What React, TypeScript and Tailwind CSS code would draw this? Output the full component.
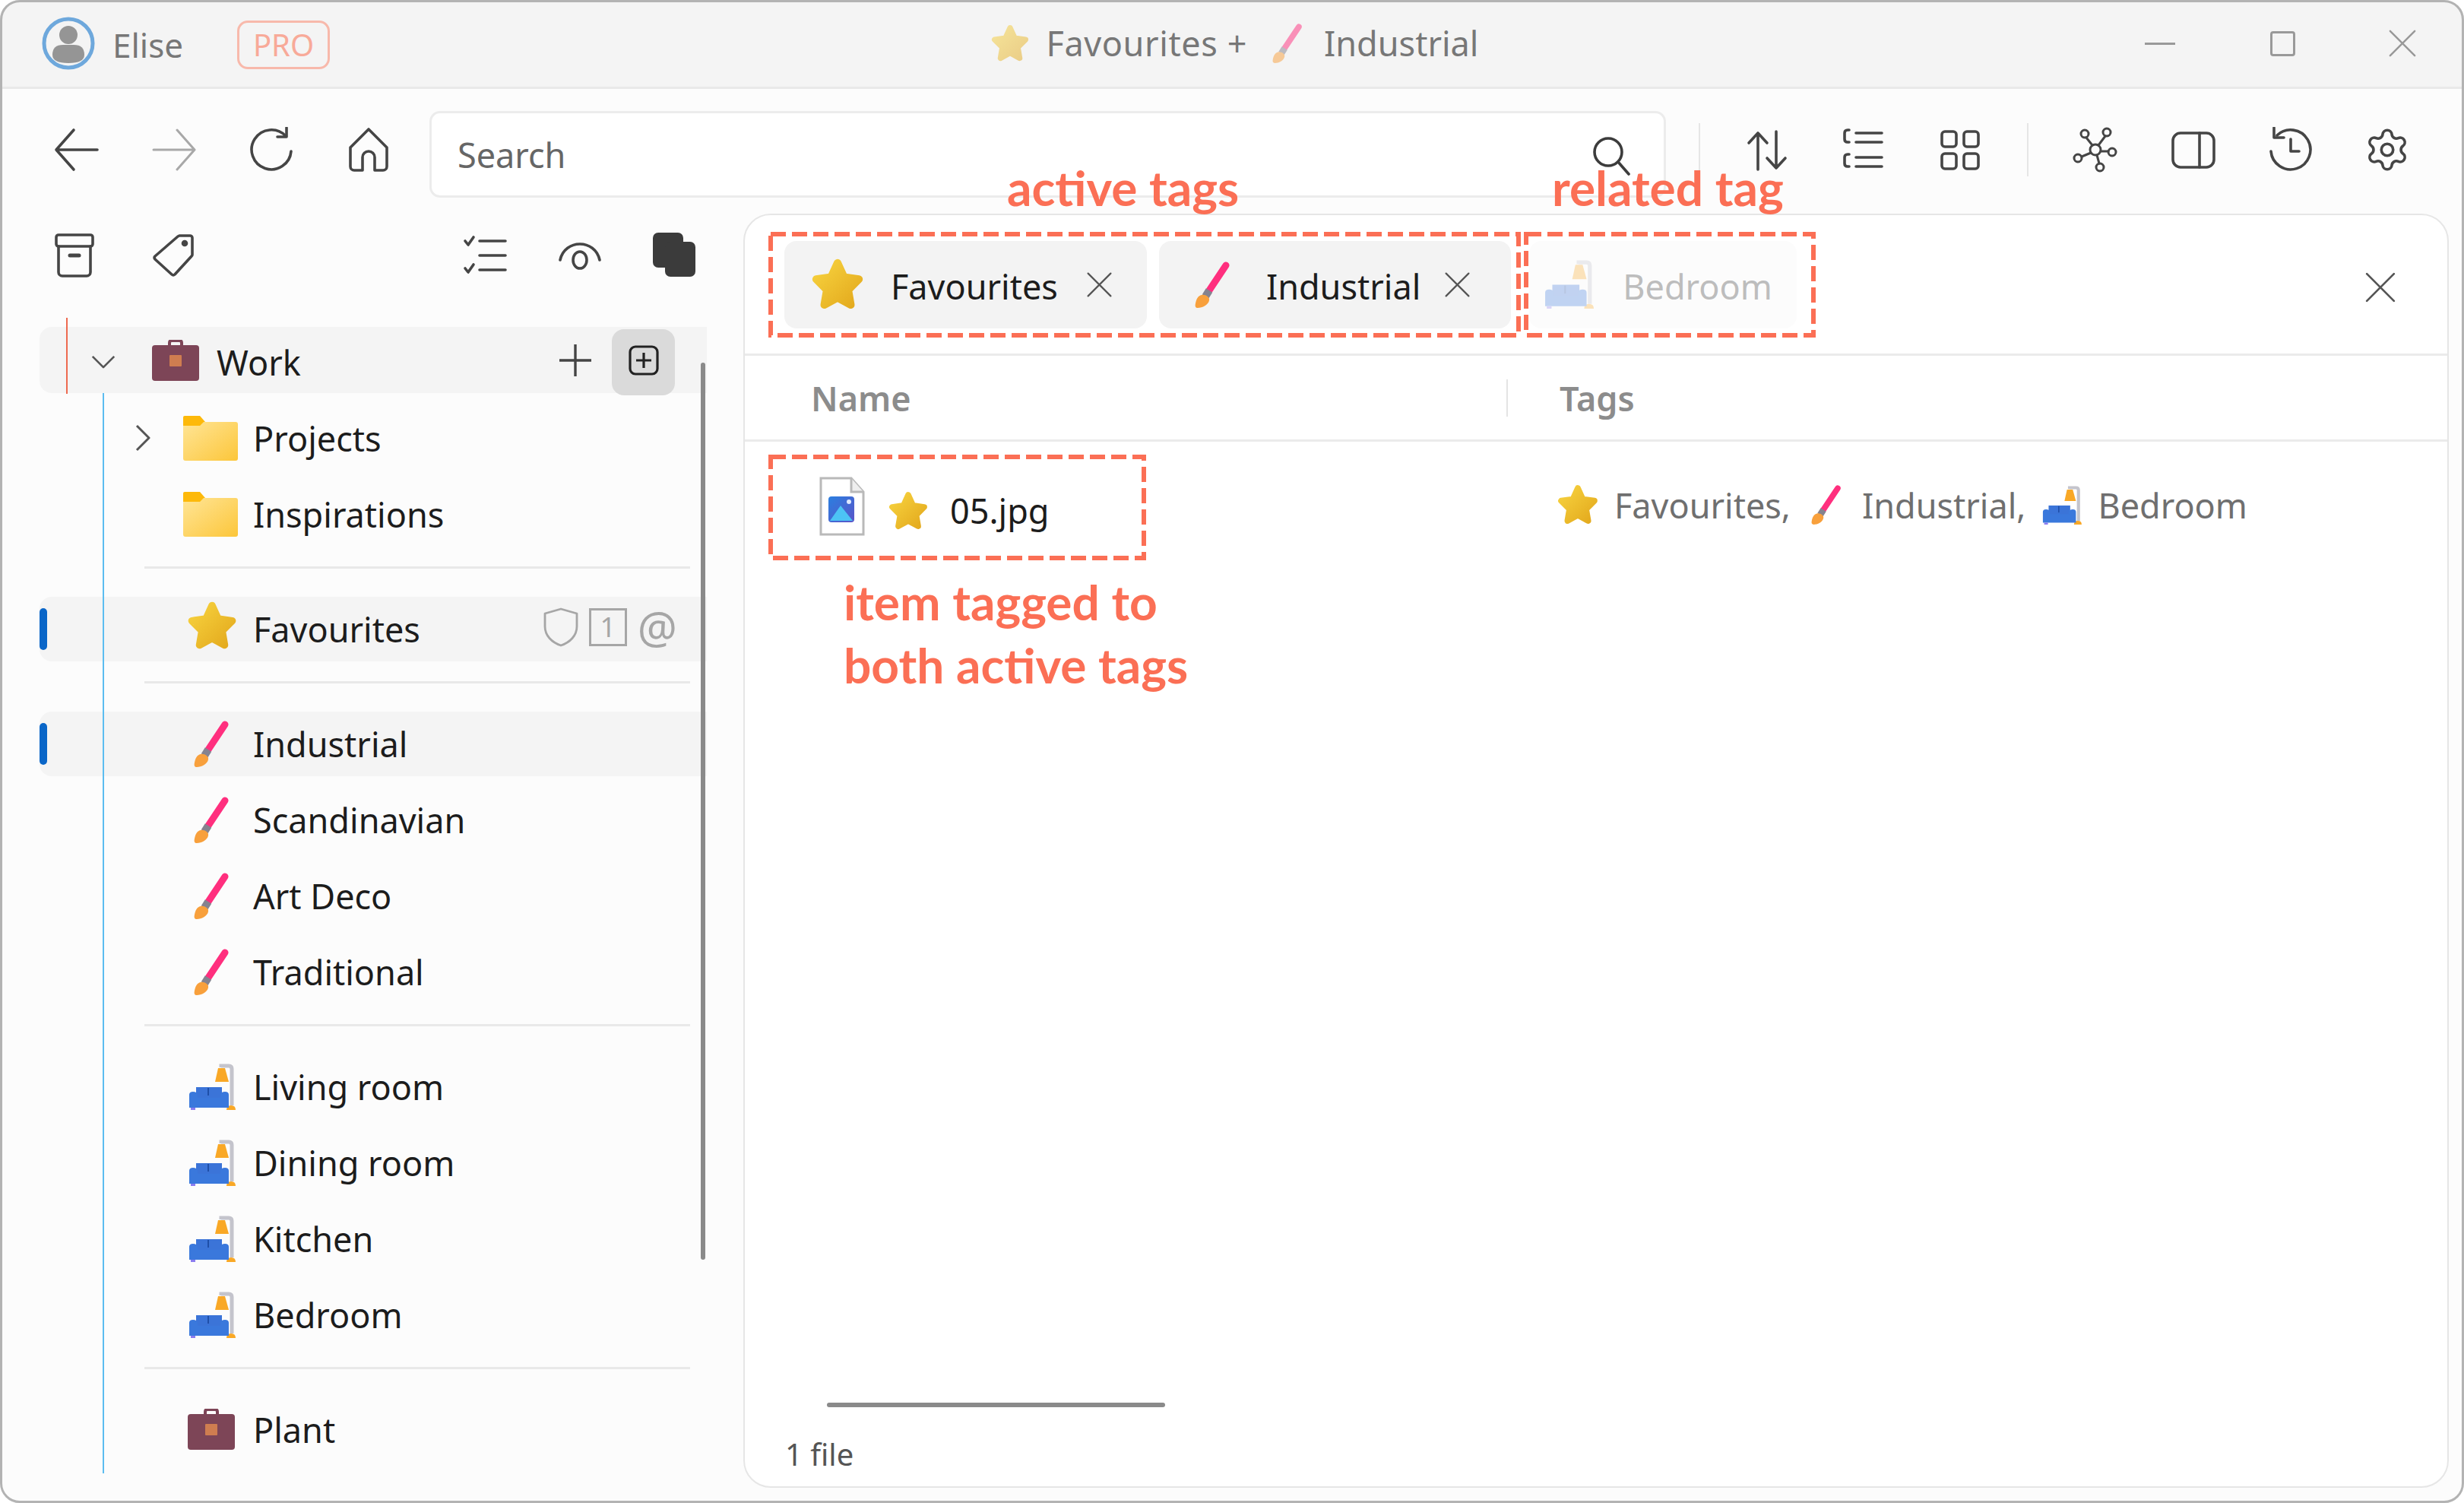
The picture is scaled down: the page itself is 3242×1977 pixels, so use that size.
import type { ReactNode } from 'react'
import { Settings } from 'lucide-react'

// --- coloured tag icons ---

function StarIcon({ className = '' }: { className?: string }) {
	return (
		<svg viewBox="0 0 64 64" className={className}>
			<defs>
				<linearGradient id="star-fill" x1="0" y1="0" x2="1" y2="1">
					<stop offset="0" stopColor="#f7d23e" />
					<stop offset="1" stopColor="#e3a91d" />
				</linearGradient>
			</defs>
			<path
				d="M32 7 39.5 23.5 57 26 44.5 38.5 47.5 56 32 47.5 16.5 56 19.5 38.5 7 26 24.5 23.5Z"
				fill="url(#star-fill)"
				stroke="url(#star-fill)"
				strokeWidth="9"
				strokeLinejoin="round"
			/>
		</svg>
	)
}

function BrushIcon({ className = '' }: { className?: string }) {
	return (
		<svg viewBox="0 0 47 61" className={className}>
			<path d="M41 5 19 38" stroke="#ff2f7e" strokeWidth="9" strokeLinecap="round" fill="none" />
			<path d="M19 38 14 46" stroke="#85838f" strokeWidth="10" fill="none" />
			<path d="M9 44c5-1 11 3 10 7-1 6-9 10-15 10-3 0-4-2-3-6 1-5 3-10 8-11Z" fill="#f8a03c" />
		</svg>
	)
}

function SofaIcon({ className = '' }: { className?: string }) {
	return (
		<svg viewBox="0 0 62 61" className={className}>
			<path d="M43 5V3h10q4 0 4 4v48" stroke="#c4c4cc" strokeWidth="5" fill="none" />
			<path d="M39 6h9l5 18H35Z" fill="#f9a826" />
			<path d="M50 61q0-6 6-6t6 6Z" fill="#f9a826" />
			<path d="M10 31h34v16H10Z" fill="#3b74d8" />
			<path d="M1 41q0-4 5-4t6 4v4h30v-4q1-4 6-4t5 4v17H1Z" fill="#3a78dc" />
			<path d="M26 32v10" stroke="#1f4fa8" strokeWidth="2" />
			<path d="M3 58h6v3H3Z" fill="#8a7cf0" />
		</svg>
	)
}

function FolderIcon() {
	return (
		<svg viewBox="0 0 72 59" className="w-[72px] h-[59px]">
			<defs>
				<linearGradient id="folder-fill" x1="0" y1="0" x2="1" y2="1">
					<stop offset="0" stopColor="#ffe596" />
					<stop offset="1" stopColor="#fcc63a" />
				</linearGradient>
			</defs>
			<path d="M2 0h20l7 8v14H0V2q0-2 2-2Z" fill="#fdb90a" />
			<path d="M0 13h22l5-5h42q3 0 3 3v45q0 3-3 3H3q-3 0-3-3Z" fill="url(#folder-fill)" />
		</svg>
	)
}

function CaseIcon({ className = '' }: { className?: string }) {
	return (
		<svg viewBox="0 0 62 54" className={className}>
			<path d="M23 9V4q0-3 3-3h10q3 0 3 3v5" stroke="#7d4557" strokeWidth="4" fill="none" />
			<rect x="0" y="7" width="62" height="47" rx="4" fill="#7d4557" />
			<rect x="23" y="20" width="16" height="15" rx="1" fill="#cf7d50" />
		</svg>
	)
}

function FileIcon() {
	return (
		<svg viewBox="0 0 60 78" className="w-[60px] h-[78px]">
			<defs>
				<linearGradient id="pic-fill" x1="0" y1="0" x2="1" y2="1">
					<stop offset="0" stopColor="#2b7fe0" />
					<stop offset="1" stopColor="#5a55c8" />
				</linearGradient>
			</defs>
			<path d="M2 2h40l16 18v56H2Z" fill="#fff" stroke="#b9b9b9" strokeWidth="3" />
			<path d="M42 2v18h16" fill="#efefef" stroke="#b9b9b9" strokeWidth="3" />
			<rect x="12" y="26" width="34" height="34" rx="4" fill="url(#pic-fill)" />
			<path d="M14 58 28 38 44 58Z" fill="#4cc3f5" />
			<circle cx="39" cy="33" r="3" fill="#dfeaff" />
		</svg>
	)
}

// --- line icons ---

function Ico({ children, className = 'text-[#454545]', sw = 3.6 }: { children: ReactNode; className?: string; sw?: number }) {
	return (
		<svg viewBox="0 0 60 60" fill="none" stroke="currentColor" strokeWidth={sw} strokeLinecap="round" strokeLinejoin="round" className={`w-[60px] h-[60px] ${className}`}>
			{children}
		</svg>
	)
}

function CloseX({ className }: { className: string }) {
	return (
		<svg viewBox="0 0 40 40" fill="none" stroke="currentColor" strokeWidth="2.6" strokeLinecap="round" className={className}>
			<path d="M3 3 37 37M37 3 3 37" />
		</svg>
	)
}

function IconBox({ children, className = 'w-[128px]' }: { children: ReactNode; className?: string }) {
	return <div className={`flex items-center justify-center ${className}`}>{children}</div>
}

// --- sidebar ---

function Row({
	icon,
	label,
	chevron,
	active,
	trailing,
}: {
	icon: ReactNode
	label: string
	chevron?: boolean
	active?: boolean
	trailing?: ReactNode
}) {
	return (
		<div className={`relative h-[100px] flex items-center`}>
			{active && (
				<>
					<div className="absolute left-0 right-0 top-[8px] h-[85px] rounded-l-[16px] bg-[#f4f4f4]" />
					<div className="absolute left-0 top-[23px] w-[10px] h-[55px] rounded-full bg-[#0a66c8]" />
				</>
			)}
			<div className="relative flex items-center w-full pl-[122px]">
				<div className="w-[67px] pl-[4px] flex justify-start">
					{chevron && (
						<svg viewBox="0 0 20 36" fill="none" stroke="#555" strokeWidth="3" strokeLinejoin="round" className="w-[20px] h-[36px]">
							<path d="M2 2 18 18 2 34" />
						</svg>
					)}
				</div>
				<div className="w-[72px] flex justify-center">{icon}</div>
				<span className="ml-[20px] text-[45px] leading-none text-[#1c1c1c]">{label}</span>
				{trailing}
			</div>
		</div>
	)
}

function Divider() {
	return <div className="mt-[19px] mb-[29px] ml-[138px] mr-[22px] h-[3px] bg-[#e9e9e9]" />
}

const sidebarStar = <StarIcon className="ml-[4px] mt-[-8px] w-[68px] h-[68px]" />
const sidebarBrush = <BrushIcon className="ml-[3px] w-[47px] h-[61px]" />
const sidebarSofa = <SofaIcon className="ml-[4px] w-[62px] h-[61px]" />

function Sidebar() {
	return (
		<aside className="relative w-[978px] shrink-0">
			<div className="h-[110px] flex items-center justify-between pl-[34px] pr-[29px]">
				<div className="flex">
					<IconBox>
						<Ico>
							<rect x="6" y="3" width="48" height="15" rx="3" />
							<path d="M9 18v34a5 5 0 0 0 5 5h32a5 5 0 0 0 5-5V18" />
							<path d="M24 30h12" strokeWidth="5" />
						</Ico>
					</IconBox>
					<IconBox className="w-[128px] pl-[4px]">
						<Ico>
							<path d="M38 4h14a3 3 0 0 1 3 3v22a3 3 0 0 1-1 2L32 55a3 3 0 0 1-4 0L6 35a3 3 0 0 1 0-4L36 5Z" />
							<circle cx="45" cy="14" r="2.5" fill="currentColor" />
						</Ico>
					</IconBox>
				</div>
				<div className="flex">
					<IconBox className="w-[124px]">
						<Ico>
							<path d="M3 11l4 5 7-10M3 47l4 5 7-10M22 11h34M22 30h34M22 49h34" />
						</Ico>
					</IconBox>
					<IconBox className="w-[124px]">
						<Ico>
							<path d="M4 36C10 8 50 8 56 36" />
							<ellipse cx="30" cy="36" rx="9" ry="11" />
						</Ico>
					</IconBox>
					<IconBox className="w-[124px]">
						<svg viewBox="0 0 60 60" className="w-[60px] h-[60px]" fill="#3b3b3b">
							<rect x="2" y="0" width="40" height="46" rx="7" />
							<rect x="18" y="12" width="40" height="46" rx="7" />
						</svg>
					</IconBox>
				</div>
			</div>

			<div className="relative mt-[35px] ml-[52px] mr-[48px]">
				<div className="absolute left-[83px] top-[91px] bottom-[-8px] w-[2px] bg-[#5cbdf0] z-10" />
				<div className="absolute left-[35px] top-[-8px] h-[100px] w-[2px] bg-[#ee6a50] z-10" />

				<div className="relative h-[100px] flex items-center">
					<div className="absolute left-0 right-0 top-[4px] h-[87px] rounded-l-[16px] bg-[#f4f4f4]" />
					<div className="relative flex items-center w-full pl-[68px] pr-[42px]">
						<div className="w-[32px] flex justify-center">
							<svg viewBox="0 0 36 20" fill="none" stroke="#555" strokeWidth="3" strokeLinejoin="round" className="w-[36px] h-[20px]">
								<path d="M2 2 18 18 34 2" />
							</svg>
						</div>
						<CaseIcon className="ml-[48px] mt-[-4px] w-[62px] h-[54px]" />
						<span className="ml-[23px] text-[45px] leading-none text-[#1c1c1c]">Work</span>
						<svg viewBox="0 0 46 46" fill="none" stroke="#444" strokeWidth="3.4" className="ml-auto mr-[25px] mt-[-4px] w-[46px] h-[46px]">
							<path d="M23 2v42M2 23h42" />
						</svg>
						<div className="w-[83px] h-[87px] rounded-[16px] bg-[#dadada] flex items-center justify-center">
							<svg viewBox="0 0 40 40" fill="none" stroke="#222" strokeWidth="3.2" className="mt-[-4px] w-[40px] h-[40px]">
								<rect x="2" y="2" width="36" height="36" rx="7" />
								<path d="M20 10v20M10 20h20" />
							</svg>
						</div>
					</div>
				</div>

				<Row chevron icon={<FolderIcon />} label="Projects" />
				<Row icon={<FolderIcon />} label="Inspirations" />
				<Divider />
				<Row
					active
					icon={sidebarStar}
					label="Favourites"
					trailing={
						<div className="ml-auto mr-[39px] mb-[4px] flex items-center gap-[14px] text-[#a6a6a6]">
							<svg viewBox="0 0 46 52" fill="none" stroke="currentColor" strokeWidth="2.8" strokeLinejoin="round" className="w-[46px] h-[52px]">
								<path d="M23 2 44 8v17c0 12-9 21-21 25C11 46 2 37 2 25V8Z" />
							</svg>
							<div className="w-[50px] h-[50px] border-[3px] border-[#a6a6a6] flex items-center justify-center text-[36px] leading-none">1</div>
							<span className="text-[58px] leading-none">@</span>
						</div>
					}
				/>
				<Divider />
				<Row active icon={sidebarBrush} label="Industrial" />
				<Row icon={sidebarBrush} label="Scandinavian" />
				<Row icon={sidebarBrush} label="Art Deco" />
				<Row icon={sidebarBrush} label="Traditional" />
				<Divider />
				<Row icon={sidebarSofa} label="Living room" />
				<Row icon={sidebarSofa} label="Dining room" />
				<Row icon={sidebarSofa} label="Kitchen" />
				<Row icon={sidebarSofa} label="Bedroom" />
				<Divider />
				<Row icon={<CaseIcon className="ml-[2px] w-[64px] h-[54px]" />} label="Plant" />
			</div>

			<div className="absolute left-[922px] top-[196px] w-[6px] h-[1180px] rounded-full bg-[#8a8a8a]" />
		</aside>
	)
}

// --- file panel ---

function Chip({ icon, label, iconBox, closeBox }: { icon: ReactNode; label: string; iconBox: string; closeBox: string }) {
	return (
		<div className="h-[115px] flex items-center rounded-[16px] bg-[#f3f3f3]">
			<div className={`flex justify-center ${iconBox}`}>{icon}</div>
			<span className="mt-[4px] text-[45px] leading-none text-[#1c1c1c]">{label}</span>
			<CloseX className={`w-[35px] h-[35px] text-[#555] ${closeBox}`} />
		</div>
	)
}

function FilePanel() {
	return (
		<main className="flex-1 mr-[20px] mb-[20px] flex flex-col rounded-[36px] border-2 border-[#e6e6e6] bg-white">
			<div className="h-[185px] shrink-0 flex items-center pl-[52px] pr-[67px] border-b-[3px] border-[#ebebeb]">
				<div className="flex gap-[16px]">
					<Chip icon={<StarIcon className="w-[72px] h-[72px]" />} label="Favourites" iconBox="w-[140px]" closeBox="ml-[37px] mr-[45px]" />
					<Chip icon={<BrushIcon className="w-[47px] h-[61px]" />} label="Industrial" iconBox="w-[141px]" closeBox="ml-[31px] mr-[53px]" />
				</div>
				<div className="ml-[24px] w-[352px] h-[115px] flex items-center rounded-[16px] bg-[#fcfcfc]">
					<SofaIcon className="ml-[20px] w-[65px] h-[64px] opacity-30" />
					<span className="ml-[38px] mt-[4px] text-[45px] leading-none text-[#bdbdbd]">Bedroom</span>
				</div>
				<CloseX className="ml-auto mt-[8px] w-[42px] h-[42px] text-[#555]" />
			</div>

			<div className="h-[113px] shrink-0 grid grid-cols-[1002px_1fr] items-center border-b-[3px] border-[#ebebeb]">
				<span className="pl-[87px] text-[45px] font-semibold leading-none text-[#8c8c8c]">Name</span>
				<div className="flex items-center">
					<div className="w-[2px] h-[49px] bg-[#e4e4e4]" />
					<span className="ml-[68px] text-[45px] font-semibold leading-none text-[#8c8c8c]">Tags</span>
				</div>
			</div>

			<div className="mt-[46px] h-[78px] grid grid-cols-[1002px_1fr]">
				<div className="pl-[98px] flex items-center">
					<FileIcon />
					<StarIcon className="ml-[30px] mt-[12px] w-[54px] h-[54px]" />
					<span className="ml-[28px] mt-[10px] text-[45px] leading-none text-[#1c1c1c]">05.jpg</span>
				</div>
				<div className="pl-[66px] pb-[4px] flex items-center text-[45px] leading-none text-[#6f6f6f]">
					<StarIcon className="w-[56px] h-[56px]" />
					<span className="ml-[20px]">Favourites,</span>
					<BrushIcon className="ml-[27px] w-[40px] h-[52px]" />
					<span className="ml-[27px]">Industrial,</span>
					<SofaIcon className="ml-[22px] w-[52px] h-[51px]" />
					<span className="ml-[21px]">Bedroom</span>
				</div>
			</div>

			<div className="mt-auto pl-[53px] pb-[22px]">
				<div className="ml-[55px] w-[445px] h-[6px] rounded-full bg-[#8a8a8a]" />
				<div className="mt-[42px] text-[40px] leading-none text-[#555]">1 file</div>
			</div>
		</main>
	)
}

export default function App() {
	const font = { fontFamily: '"Noto Sans", sans-serif' }

	return (
		<div className="relative w-[3242px] h-[1977px] overflow-hidden bg-white" style={font}>
			<div className="h-full flex flex-col rounded-[26px] overflow-hidden bg-[#fcfcfc]">
				{/* Title bar */}
				<header className="h-[117px] shrink-0 grid grid-cols-[1fr_auto_1fr] items-center bg-[#f4f4f4] border-b-[3px] border-[#e9e9e9]">
					<div className="flex items-center pl-[55px]">
						<svg viewBox="0 0 70 70" className="w-[70px] h-[70px]">
							<circle cx="35" cy="35" r="32" fill="none" stroke="#6ea8dc" strokeWidth="5" />
							<circle cx="35" cy="24" r="12" fill="#959595" />
							<path d="M14 50q0-13 14-13h14q14 0 14 13 0 11-21 11T14 50Z" fill="#959595" />
						</svg>
						<span className="ml-[23px] mt-[4px] text-[44px] leading-none text-[#777]">Elise</span>
						<div className="ml-[71px] mt-[4px] w-[122px] h-[64px] flex items-center justify-center rounded-[14px] border-[3px] border-[#f8b9ab] text-[40px] leading-none text-[#f8aa99]">PRO</div>
					</div>
					<div className="pl-[6px] flex items-center text-[45px] leading-none text-[#777]">
						<StarIcon className="w-[52px] h-[56px] opacity-50" />
						<span className="ml-[22px] mb-[2px] tracking-[0.6px]">Favourites +</span>
						<BrushIcon className="ml-[33px] w-[40px] h-[52px] opacity-50" />
						<span className="ml-[28px] mb-[2px]">Industrial</span>
					</div>
					<div className="flex items-center justify-end pr-[62px] text-[#999]">
						<div className="w-[40px] h-[3px] bg-[#999]" />
						<div className="ml-[125px] w-[33px] h-[33px] rounded-[4px] border-[3px] border-[#999]" />
						<CloseX className="ml-[122px] w-[38px] h-[38px]" />
					</div>
				</header>

				{/* Toolbar */}
				<div className="h-[164px] shrink-0 pt-[29px] pl-[37px] flex items-start">
					<div className="h-[102px] flex items-center">
						<IconBox>
							<Ico>
								<path d="M57 30H3M26 4 3 30l23 26" />
							</Ico>
						</IconBox>
						<IconBox>
							<Ico className="text-[#a8a8a8]" sw={3}>
								<path d="M3 30h54M34 4l23 26-23 26" />
							</Ico>
						</IconBox>
						<IconBox>
							<Ico>
								<path d="M49 12A26 26 0 1 0 56 32" />
								<path d="M50 1v12H38" />
							</Ico>
						</IconBox>
						<IconBox>
							<Ico>
								<path d="M30 3 6 27v25a5 5 0 0 0 5 5h11V40a8 8 0 0 1 16 0v17h11a5 5 0 0 0 5-5V27Z" />
							</Ico>
						</IconBox>
					</div>
					<div className="ml-[16px] w-[1627px] h-[114px] pl-[34px] pr-[44px] flex items-center justify-between rounded-[14px] border-[3px] border-[#ececec] bg-white">
						<span className="text-[45px] leading-none text-[#666]">Search</span>
						<svg viewBox="0 0 50 52" fill="none" stroke="#3c3c3c" strokeWidth="3.6" strokeLinecap="round" className="mt-[4px] w-[50px] h-[52px]">
							<circle cx="21" cy="21" r="18" />
							<path d="M34 34 48 50" />
						</svg>
					</div>
					<div className="h-[102px] flex items-center">
						<div className="ml-[43px] w-[2px] h-[70px] bg-[#e6e6e6]" />
						<div className="ml-[24px] flex">
							<IconBox className="w-[127px]">
								<Ico>
									<path d="M18 56V8M6 21 18 8l12 13M42 6v48M30 41l12 13 12-13" />
								</Ico>
							</IconBox>
							<IconBox className="w-[127px]">
								<Ico>
									<path d="M11 4H9Q5 4 5 8v8q0 4 4 4h2M11 36H9q-4 0-4 4v8q0 4 4 4h2M20 8h34M20 20h34M20 40h34M20 52h34" />
								</Ico>
							</IconBox>
							<IconBox className="w-[127px]">
								<Ico>
									<rect x="6" y="6" width="19" height="20" rx="4" />
									<rect x="35" y="6" width="19" height="20" rx="4" />
									<rect x="6" y="35" width="19" height="20" rx="4" />
									<rect x="35" y="35" width="19" height="20" rx="4" />
								</Ico>
							</IconBox>
						</div>
						<div className="ml-[25px] w-[2px] h-[70px] bg-[#e6e6e6]" />
						<div className="ml-[24px] flex">
							<IconBox>
								<Ico sw={3}>
									<circle cx="30" cy="30" r="7" />
									<circle cx="16" cy="9" r="5" />
									<circle cx="45" cy="7" r="5" />
									<circle cx="52" cy="33" r="5" />
									<circle cx="36" cy="53" r="5" />
									<circle cx="7" cy="41" r="5" />
									<path d="M18 14 26 24M43 12 34 24M47 32H37M35 48 32 37M12 39 24 34" />
								</Ico>
							</IconBox>
							<IconBox className="w-[129px]">
								<Ico>
									<rect x="3" y="8" width="54" height="45" rx="10" />
									<path d="M38 8v45" />
								</Ico>
							</IconBox>
							<IconBox className="w-[127px]">
								<Ico>
									<path d="M12 11A26 26 0 1 1 4 32" />
									<path d="M8 1v13h13M30 16v16h11" />
								</Ico>
							</IconBox>
							<IconBox className="w-[127px]">
								<Settings className="w-[62px] h-[62px] text-[#454545]" strokeWidth={1.4} />
							</IconBox>
						</div>
					</div>
				</div>

				<div className="flex-1 min-h-0 flex">
					<Sidebar />
					<FilePanel />
				</div>
			</div>

			{/* Window edge */}
			<div className="absolute inset-0 rounded-[26px] border-[3px] border-[#b3b3b3] pointer-events-none" />

			{/* Annotations laid over the screenshot */}
			<svg viewBox="0 0 3242 1977" className="absolute inset-0 w-[3242px] h-[1977px] pointer-events-none" fill="none" stroke="#fb6f55" strokeWidth="6" strokeDasharray="20 8">
				<rect x="1014" y="308" width="984" height="133" />
				<rect x="2008" y="308" width="378" height="133" />
				<rect x="1014" y="601" width="491" height="133" />
			</svg>
			<div className="absolute left-[1325px] top-[205px] text-[64px] font-bold leading-[84px] text-[#fb6f55]" style={{ fontFamily: 'Lato, sans-serif' }}>active tags</div>
			<div className="absolute left-[2042px] top-[205px] text-[64px] font-bold leading-[84px] text-[#fb6f55]" style={{ fontFamily: 'Lato, sans-serif' }}>related tag</div>
			<div className="absolute left-[1110px] top-[750px] text-[64px] font-bold leading-[83px] text-[#fb6f55]" style={{ fontFamily: 'Lato, sans-serif' }}>
				item tagged to
				<br />
				both active tags
			</div>
		</div>
	)
}
